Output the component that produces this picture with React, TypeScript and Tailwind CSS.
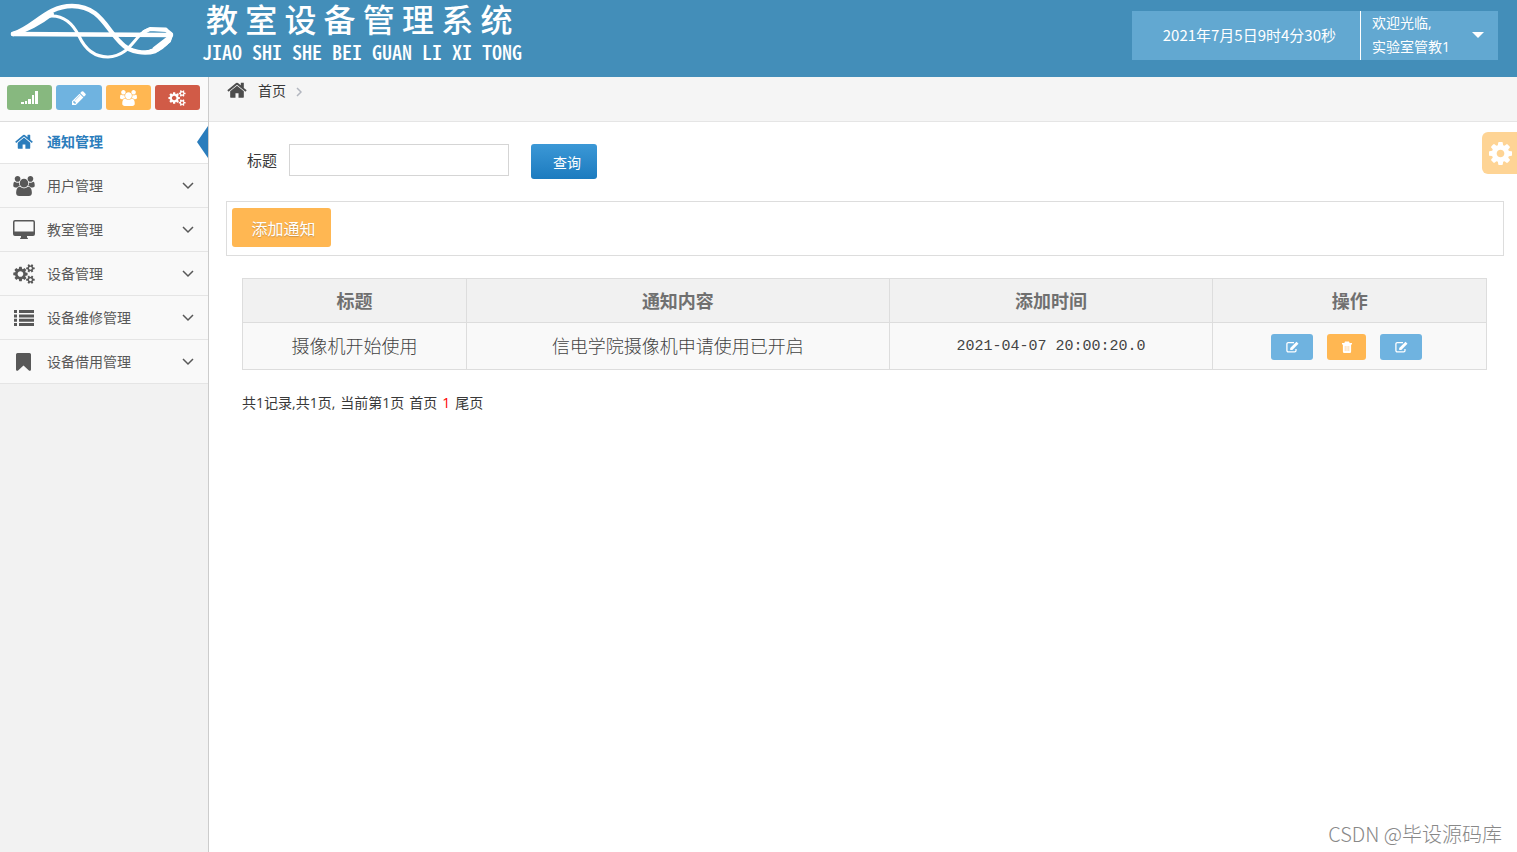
import React from "react";
import type { ReactNode } from "react";

function HomeIcon({ className }: { className?: string }) {
	return (
		<svg viewBox="64 200 1664 1350" fill="currentColor" className={className} aria-hidden="true">
			<path d="M1472 992v480q0 26-19 45t-45 19h-384v-384h-256v384h-384q-26 0-45-19t-19-45v-480q0-1 .5-3t.5-3l575-474 575 474q1 2 1 6zm223-69l-62 74q-8 9-21 11h-3q-13 0-21-7l-692-577-692 577q-12 8-24 7-13-2-21-11l-62-74q-8-10-7-23.5t11-21.5l719-599q32-26 76-26t76 26l244 204v-195q0-14 9-23t23-9h192q14 0 23 9t9 23v408l219 182q10 8 11 21.5t-7 23.5z" />
		</svg>
	);
}

function UsersIcon({ className }: { className?: string }) {
	return (
		<svg viewBox="0 0 1920 1792" fill="currentColor" className={className} aria-hidden="true">
			<path d="M593 896q-162 5-265 128h-134q-82 0-138-40.5t-56-118.5q0-353 124-353 6 0 43.5 21t97.5 42.5 119 21.5q67 0 133-23-5 37-5 66 0 139 81 256zm1071 637q0 120-73 189.5t-194 69.5h-874q-121 0-194-69.5t-73-189.5q0-53 3.5-103.5t14-109 26.5-108.5 43-97.5 62-81 85.5-53.5 111.5-20q10 0 43 21.5t73 48 107 48 135 21.5 135-21.5 107-48 73-48 43-21.5q61 0 111.5 20t85.5 53.5 62 81 43 97.5 26.5 108.5 14 109 3.5 103.5zm-1024-1277q0 106-75 181t-181 75-181-75-75-181 75-181 181-75 181 75 75 181zm704 384q0 159-112.5 271.5t-271.5 112.5-271.5-112.5-112.5-271.5 112.5-271.5 271.5-112.5 271.5 112.5 112.5 271.5zm576 225q0 78-56 118.5t-138 40.5h-134q-103-123-265-128 81-117 81-256 0-29-5-66 66 23 133 23 59 0 119-21.5t97.5-42.5 43.5-21q124 0 124 353zm-128-609q0 106-75 181t-181 75-181-75-75-181 75-181 181-75 181 75 75 181z" />
		</svg>
	);
}

function CogsIcon({ className }: { className?: string }) {
	return (
		<svg viewBox="0 0 1920 1792" fill="currentColor" className={className} aria-hidden="true">
			<path d="M896 896q0-106-75-181t-181-75-181 75-75 181 75 181 181 75 181-75 75-181zm768 512q0-52-38-90t-90-38-90 38-38 90q0 53 37.5 90.5t90.5 37.5 90.5-37.5 37.5-90.5zm0-1024q0-52-38-90t-90-38-90 38-38 90q0 53 37.5 90.5t90.5 37.5 90.5-37.5 37.5-90.5zm-384 421v185q0 10-7 19.5t-16 10.5l-155 24q-11 35-32 76 34 48 90 115 7 11 7 20 0 12-7 19-23 30-82.5 89.5t-78.5 59.5q-11 0-21-7l-115-90q-37 19-77 31-11 108-23 155-7 24-30 24h-186q-11 0-20-7.5t-10-17.5l-23-153q-34-10-75-31l-118 89q-7 7-20 7-11 0-21-8-144-133-144-160 0-9 7-19 10-14 41-53t47-61q-23-44-35-82l-152-24q-10-1-17-9.5t-7-19.5v-185q0-10 7-19.5t16-10.5l155-24q11-35 32-76-34-48-90-115-7-11-7-20 0-12 7-20 22-30 82-89t79-59q11 0 21 7l115 90q34-18 77-32 11-108 23-154 7-24 30-24h186q11 0 20 7.5t10 17.5l23 153q34 10 75 31l118-89q8-7 20-7 11 0 21 8 144 133 144 160 0 8-7 19-12 16-42 54t-45 60q23 48 34 82l152 23q10 2 17 10.5t7 19.5zm640 533v140q0 16-149 31-12 27-30 52 51 113 51 138 0 4-4 7-122 71-124 71-8 0-46-47t-52-68q-20 2-30 2t-30-2q-14 21-52 68t-46 47q-2 0-124-71-4-3-4-7 0-25 51-138-18-25-30-52-149-15-149-31v-140q0-16 149-31 13-29 30-52-51-113-51-138 0-4 4-7 4-2 35-20t59-34 30-16q8 0 46 46.5t52 67.5q20-2 30-2t30 2q51-71 92-112l6-2q4 0 124 70 4 3 4 7 0 25-51 138 17 23 30 52 149 15 149 31zm0-1024v140q0 16-149 31-12 27-30 52 51 113 51 138 0 4-4 7-122 71-124 71-8 0-46-47t-52-68q-20 2-30 2t-30-2q-14 21-52 68t-46 47q-2 0-124-71-4-3-4-7 0-25 51-138-18-25-30-52-149-15-149-31v-140q0-16 149-31 13-29 30-52-51-113-51-138 0-4 4-7 4-2 35-20t59-34 30-16q8 0 46 46.5t52 67.5q20-2 30-2t30 2q51-71 92-112l6-2q4 0 124 70 4 3 4 7 0 25-51 138 17 23 30 52 149 15 149 31z" />
		</svg>
	);
}

function CogIcon() {
	return (
		<svg viewBox="128 128 1536 1536" fill="currentColor" className="size-[23px]" aria-hidden="true">
			<path d="M1152 896q0-106-75-181t-181-75-181 75-75 181 75 181 181 75 181-75 75-181zm512-109v222q0 12-8 23t-20 13l-185 28q-19 54-39 91 35 50 107 138 10 12 10 25t-9 23q-27 37-99 108t-94 71q-12 0-26-9l-138-108q-44 23-91 38-16 136-29 186-7 28-36 28h-222q-14 0-24.5-8.5t-11.5-21.5l-28-184q-49-16-90-37l-141 107q-10 9-25 9-14 0-25-11-126-114-165-168-7-10-7-23 0-12 8-23 15-21 51-66.5t54-70.5q-27-50-41-99l-183-27q-13-2-21-12.5t-8-23.5v-222q0-12 8-23t19-13l186-28q14-46 39-92-40-57-107-138-10-12-10-24 0-10 9-23 26-36 98.5-107.5t94.5-71.5q13 0 26 10l138 107q44-23 91-38 16-136 29-186 7-28 36-28h222q14 0 24.5 8.5t11.5 21.5l28 184q49 16 90 37l142-107q9-9 24-9 13 0 25 10 129 119 165 170 7 8 7 22 0 12-8 23-15 21-51 66.5t-54 70.5q26 50 41 98l183 28q13 2 21 12.5t8 23.5z" />
		</svg>
	);
}

function PencilIcon() {
	return (
		<svg viewBox="128 128 1536 1536" fill="currentColor" className="size-3.5" aria-hidden="true">
			<path d="M491 1536l91-91-235-235-91 91v107h128v128h107zm523-928q0-22-22-22-10 0-17 7l-542 542q-7 7-7 17 0 22 22 22 10 0 17-7l542-542q7-7 7-17zm-54-192l416 416-832 832h-416v-416zm683 96q0 53-37 90l-166 166-416-416 166-165q36-38 90-38 53 0 91 38l235 234q37 39 37 91z" />
		</svg>
	);
}

function SignalIcon() {
	return (
		<svg viewBox="0 0 17 13" fill="currentColor" className="h-[13px] w-[17px]" aria-hidden="true">
			<path d="M0 11h3v2H0zM4 10h2v3H4zM7 8h3v5H7zM11 4h2v9h-2zM14 0h3v13h-3z" />
		</svg>
	);
}

function DesktopIcon() {
	return (
		<svg viewBox="0 0 22 19" fill="currentColor" className="h-[19px] w-[22px]" aria-hidden="true">
			<path
				fillRule="evenodd"
				d="M2 0h18a2 2 0 0 1 2 2v12a2 2 0 0 1-2 2h-6v1.5q1 .2 1 1.5H7q0-1.3 1-1.5V16H2a2 2 0 0 1-2-2V2a2 2 0 0 1 2-2zM2 1.5a.5.5 0 0 0-.5.5v9.5h19V2a.5.5 0 0 0-.5-.5z"
			/>
		</svg>
	);
}

function ListIcon() {
	return (
		<svg viewBox="0 0 20 16" fill="currentColor" className="h-4 w-5" aria-hidden="true">
			<path d="M0 0h3v3H0zM5 0h15v3H5zM0 4.4h3v3H0zM5 4.4h15v3H5zM0 8.7h3v3H0zM5 8.7h15v3H5zM0 13h3v3H0zM5 13h15v3H5z" />
		</svg>
	);
}

function BookmarkIcon() {
	return (
		<svg viewBox="0 0 15 18" fill="currentColor" className="h-[18px] w-[15px]" aria-hidden="true">
			<path d="M1.5 0h12A1.5 1.5 0 0 1 15 1.5v15q0 1.800-1.800 1.200L7.500 12.500l-5.700 5.200Q0 18.300 0 16.500v-15A1.500 1.500 0 0 1 1.500 0z" />
		</svg>
	);
}

function EditIcon() {
	return (
		<svg viewBox="0 0 13 12" fill="none" stroke="currentColor" className="h-3 w-[13px]" aria-hidden="true">
			<path strokeWidth="1.3" d="M8 1.7H2.2A1.3 1.3 0 0 0 .9 3v6.5a1.3 1.3 0 0 0 1.3 1.3h6.5A1.3 1.3 0 0 0 10 9.5V8" />
			<path fill="currentColor" stroke="none" d="M10.5.8l2 2-6.2 6.1H4.2V6.9z" />
		</svg>
	);
}

function TrashIcon() {
	return (
		<svg viewBox="0 0 12 12" fill="none" stroke="currentColor" className="size-3" aria-hidden="true">
			<path fill="currentColor" stroke="none" d="M4 .5h4l.7 1.5h2.3v1.5H1V2h2.3zM1.9 3.5h8.2v7q0 1.5-1.2 1.5H3.1q-1.2 0-1.2-1.5z" />
			<path stroke="#ffcf8f" strokeWidth=".7" d="M4.2 5v5M6 5v5M7.8 5v5" />
		</svg>
	);
}

function WaveLogo() {
	return (
		<svg viewBox="0 0 168 58" fill="none" stroke="#fff" strokeLinecap="round" strokeLinejoin="round" className="h-[58px] w-[168px]" aria-hidden="true">
			<path strokeWidth="4.5" d="M5 31C26 25 38 3 64 3C92 3 98 26 113 40C122 50 138 51 147 48C155 44 161 38 163 32" />
			<path strokeWidth="3" d="M5 31C22 28 30 13 44 13C58 13 66 23 71 33C77 46 86 54 100 54C125 53 127 27 144 26L158 26" />
			<path strokeWidth="4.5" d="M5 31L162 32" />
			<path strokeWidth="4" d="M136 29L142 26L158 27L163 31L161 38L149 47L143 48" />
			<path strokeWidth="5" d="M160 36L147 46" />
			<path strokeWidth="4" d="M6 31Q26 25 44 11" />
		</svg>
	);
}

const shortcuts: { label: string; color: string; icon: ReactNode }[] = [
	{ label: "统计", color: "bg-[#87b87f]", icon: <SignalIcon /> },
	{ label: "编辑", color: "bg-[#6fb3e0]", icon: <PencilIcon /> },
	{ label: "用户", color: "bg-[#ffb752]", icon: <UsersIcon className="h-4 w-[17px]" /> },
	{ label: "设置", color: "bg-[#d15b47]", icon: <CogsIcon className="h-4 w-[18px]" /> },
];

const menu: { label: string; icon: ReactNode }[] = [
	{ label: "用户管理", icon: <UsersIcon className="h-5 w-[22px]" /> },
	{ label: "教室管理", icon: <DesktopIcon /> },
	{ label: "设备管理", icon: <CogsIcon className="h-5 w-[22px]" /> },
	{ label: "设备维修管理", icon: <ListIcon /> },
	{ label: "设备借用管理", icon: <BookmarkIcon /> },
];

const columns = [
	{ title: "标题", width: "w-[18%]" },
	{ title: "通知内容", width: "w-[34%]" },
	{ title: "添加时间", width: "w-[26%]" },
	{ title: "操作", width: "w-[22%]" },
];

function Header() {
	return (
		<header className="flex h-[77px] items-start justify-between bg-[#438eb9] pr-[19px] pl-2 text-white">
			<div className="flex">
				<div className="pt-[3px]">
					<WaveLogo />
				</div>
				<div className="ml-[26px] whitespace-nowrap">
					<h1 className="pl-1 font-['Noto_Sans_CJK_SC',sans-serif] text-[32px] leading-9 font-medium">教 室 设 备 管 理 系 统</h1>
					<p className="pt-1 font-['Noto_Sans_CJK_SC',sans-serif] text-xl leading-6 font-medium [font-feature-settings:'hwid']">JIAO SHI SHE BEI GUAN LI XI TONG</p>
				</div>
			</div>
			<div className="mt-[11px] flex h-[49px] w-[366px] bg-[#62a8d1]">
				<div className="flex w-[229px] items-center justify-end border-r border-white pr-6 pb-0.5 font-['Noto_Sans_CJK_SC',sans-serif] text-[15px]">2021年7月5日9时4分30秒</div>
				<button type="button" className="flex flex-1 items-center justify-between pr-[14px] pb-0.5 pl-[11px] text-left leading-6">
					<span>
						欢迎光临,
						<br />
						实验室管教1
					</span>
					<span className="border-x-6 border-t-6 border-x-transparent border-t-white" />
				</button>
			</div>
		</header>
	);
}

function Sidebar() {
	return (
		<aside className="w-[209px] shrink-0 border-r border-[#cccccc] bg-[#f2f2f2]">
			<div className="flex h-[45px] gap-1 border-b border-[#dddddd] bg-[#fafafa] pt-2 pr-2 pl-[7px]">
				{shortcuts.map((item) => (
					<button key={item.label} type="button" aria-label={item.label} className={`flex h-[25px] flex-1 items-center justify-center rounded-[3px] text-white ${item.color}`}>
						{item.icon}
					</button>
				))}
			</div>
			<nav>
				<a href="#" className="relative flex h-[42px] items-center border-b border-[#e5e5e5] bg-white pb-0.5 font-bold text-[#2b7dbc]">
					<span className="flex w-[47px] justify-center">
						<HomeIcon className="h-[15px] w-[18px]" />
					</span>
					通知管理
					<span className="absolute top-1 right-0 border-y-16 border-r-11 border-y-transparent border-r-[#2b7dbc]" />
				</a>
				{menu.map((item) => (
					<a key={item.label} href="#" className="flex h-11 items-center border-b border-[#e5e5e5] bg-[#f9f9f9] pr-[14px] text-[#585858]">
						<span className="flex w-[47px] justify-center">{item.icon}</span>
						{item.label}
						<svg viewBox="0 0 12 8" fill="none" stroke="currentColor" strokeWidth="1.5" className="ml-auto h-2 w-3" aria-hidden="true">
							<path d="M1 1l5 5 5-5" />
						</svg>
					</a>
				))}
			</nav>
		</aside>
	);
}

function NoticeTable() {
	return (
		<table className="w-full table-fixed border-collapse border border-[#dddddd] text-center text-lg">
			<thead>
				<tr className="h-11 bg-[#f1f1f1] text-[#707070]">
					{columns.map((column) => (
						<th key={column.title} className={`border border-[#dddddd] font-bold ${column.width}`}>
							{column.title}
						</th>
					))}
				</tr>
			</thead>
			<tbody>
				<tr className="h-[47px] bg-[#f9f9f9] text-[#444444]">
					<td className="border border-[#dddddd] font-light">摄像机开始使用</td>
					<td className="border border-[#dddddd] font-light">信电学院摄像机申请使用已开启</td>
					<td className="border border-[#dddddd] pt-0.5 font-['Liberation_Mono',monospace] text-[15px]">2021-04-07 20:00:20.0</td>
					<td className="border border-[#dddddd] pt-px">
						<div className="flex justify-center gap-[14px] pr-1.5 text-white">
							<button type="button" aria-label="编辑" className="flex h-[26px] w-[42px] items-center justify-center rounded-[3px] bg-[#6fb3e0]">
								<EditIcon />
							</button>
							<button type="button" aria-label="删除" className="flex h-[26px] w-[39px] items-center justify-center rounded-[3px] bg-[#ffb752]">
								<TrashIcon />
							</button>
							<button type="button" aria-label="查看" className="flex h-[26px] w-[42px] items-center justify-center rounded-[3px] bg-[#6fb3e0]">
								<EditIcon />
							</button>
						</div>
					</td>
				</tr>
			</tbody>
		</table>
	);
}

export default function App() {
	return (
		<div className="relative flex min-h-screen flex-col bg-white font-['Open_Sans','Noto_Sans_CJK_SC',sans-serif] text-sm text-[#393939]">
			<Header />
			<div className="flex flex-1">
				<Sidebar />
				<main className="min-w-0 flex-1">
					<div className="flex h-[45px] items-start border-b border-[#e5e5e5] bg-[#f5f5f5] pt-1 pl-[18px]">
						<HomeIcon className="mt-px h-4 w-5 text-[#4c4c4c]" />
						<a href="#" className="ml-[11px] leading-5">
							首页
						</a>
						<svg viewBox="0 0 6 10" fill="none" stroke="#b2b6bf" strokeWidth="1.5" className="mt-1.5 ml-2.5 h-2.5 w-1.5" aria-hidden="true">
							<path d="M1 1l4 4-4 4" />
						</svg>
					</div>
					<form className="flex items-start pt-[22px] pl-[38px]" onSubmit={(e) => e.preventDefault()}>
						<label htmlFor="title" className="w-[42px] text-[15px] leading-8">
							标题
						</label>
						<input id="title" type="text" className="h-8 w-[220px] border border-[#d5d5d5] bg-white px-2" />
						<button type="submit" className="ml-[22px] h-[35px] w-[66px] rounded-[3px] bg-linear-to-b from-[#3b98d6] to-[#1b7bbf] pt-0.5 pl-1.5 text-white">
							查询
						</button>
					</form>
					<div className="mt-[22px] mr-[13px] ml-[17px] h-[55px] border border-[#dddddd] px-[5px] pt-1.5">
						<button type="button" className="h-[39px] w-[99px] rounded-[3px] bg-[#ffb752] pt-0.5 pl-1 text-base leading-5 text-white text-shadow-xs">
							添加通知
						</button>
					</div>
					<div className="mt-[22px] mr-[30px] ml-[33px]">
						<NoticeTable />
						<p className="mt-[21px] flex gap-[5px] leading-6">
							<span>共1记录,共1页,</span>
							<span>当前第1页</span>
							<a href="#">首页</a>
							<span className="text-[#ff0000]">1</span>
							<a href="#">尾页</a>
						</p>
					</div>
				</main>
			</div>
			<button type="button" aria-label="设置" className="absolute top-[132px] right-0 flex h-[42px] w-[35px] items-center justify-center rounded-l-md bg-[#fed495] pl-0.5 text-white">
				<CogIcon />
			</button>
			<p className="absolute right-[15px] bottom-1 font-['Noto_Sans_CJK_SC',sans-serif] text-xl leading-7 font-light text-[#888888]">CSDN @毕设源码库</p>
		</div>
	);
}
